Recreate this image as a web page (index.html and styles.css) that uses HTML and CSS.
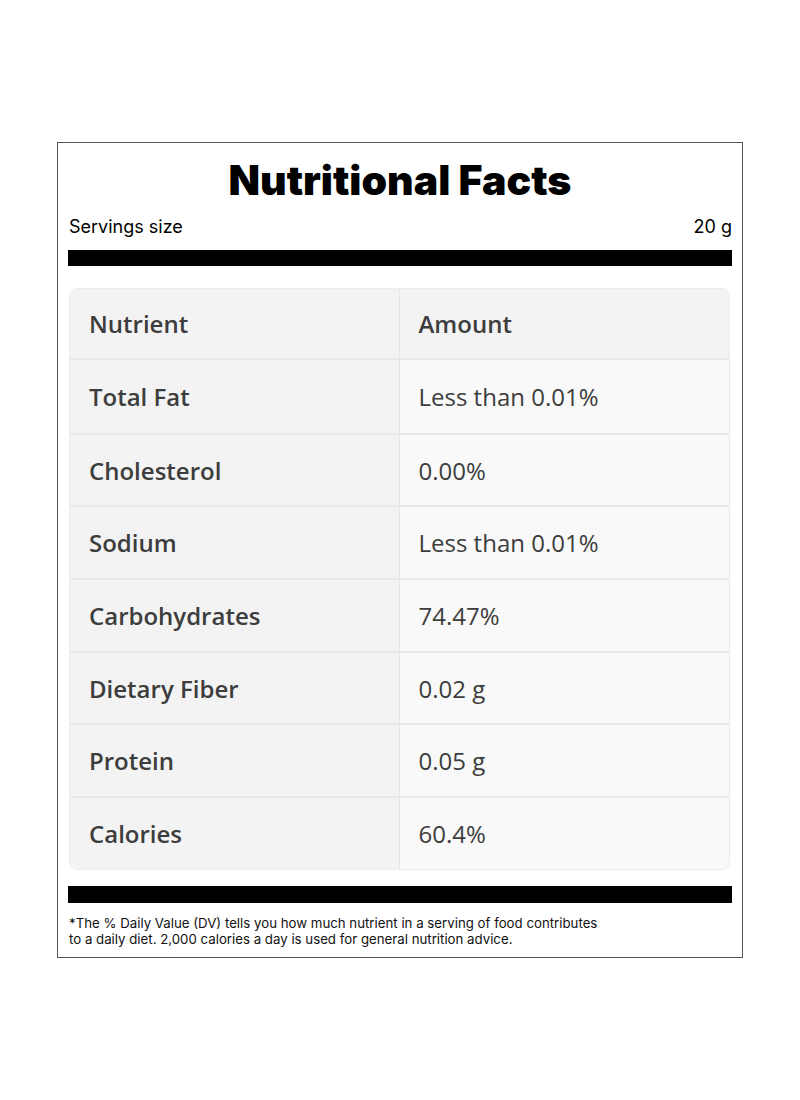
FILE: index.html
```html
<!DOCTYPE html>
<html lang="en">
<head>
<meta charset="utf-8">
<title>Nutritional Facts</title>
<link rel="stylesheet" href="styles.css">
</head>
<body>
<div class="label">
  <h1 class="title">Nutritional Facts</h1>
  <div class="serving">
    <span>Servings size</span>
    <span>20 g</span>
  </div>
  <div class="bar"></div>
  <table class="facts">
    <thead>
      <tr><th>Nutrient</th><th>Amount</th></tr>
    </thead>
    <tbody>
      <tr><td>Total Fat</td><td>Less than 0.01%</td></tr>
      <tr><td>Cholesterol</td><td>0.00%</td></tr>
      <tr><td>Sodium</td><td>Less than 0.01%</td></tr>
      <tr><td>Carbohydrates</td><td>74.47%</td></tr>
      <tr><td>Dietary Fiber</td><td>0.02 g</td></tr>
      <tr><td>Protein</td><td>0.05 g</td></tr>
      <tr><td>Calories</td><td>60.4%</td></tr>
    </tbody>
  </table>
  <div class="bar bar-bottom"></div>
  <p class="note">*The % Daily Value (DV) tells you how much nutrient in a serving of food contributes<br>to a daily diet. 2,000 calories a day is used for general nutrition advice.</p>
</div>
</body>
</html>
```

FILE: styles.css
```css
html, body {
  margin: 0;
  padding: 0;
  background: #fff;
}
body {
  font-family: Inter, "Liberation Sans", sans-serif;
  color: #000;
}
.label {
  box-sizing: border-box;
  width: 686px;
  margin: 142px 0 0 57px;
  border: 1px solid #555;
  padding: 14px 10px 10px 10px;
}
.title {
  margin: 0;
  text-align: center;
  font-family: Inter, sans-serif;
  font-weight: 900;
  font-size: 41px;
  line-height: 46px;
  letter-spacing: 0;
}
.serving {
  display: flex;
  justify-content: space-between;
  font-size: 18px;
  line-height: 22px;
  margin-top: 13px;
  padding: 0 0 0 1px;
}
.bar {
  height: 16px;
  background: #000;
  margin-top: 12px;
}
.facts {
  width: 661px;
  margin: 22px 0 0 1px;
  border-collapse: separate;
  border-spacing: 0;
  border: 1px solid #ececec;
  border-radius: 8px;
  overflow: hidden;
  font-family: "Open Sans", "Noto Sans", sans-serif;
  font-size: 24px;
  color: #3d3d3d;
}
.facts th,
.facts td {
  height: 72.7px;
  padding: 0 0 0 19px;
  text-align: left;
  vertical-align: middle;
  box-sizing: border-box;
  width: 50%;
}
.facts th {
  font-weight: 600;
  background: #f3f3f3;
  border-bottom: 2px solid #e8e8e8;
  height: 71px;
}
.facts td:first-child {
  font-weight: 600;
  background: #f3f3f3;
}
.facts td:last-child {
  font-weight: 400;
  background: #f9f9f9;
}
.facts th:first-child,
.facts td:first-child {
  border-right: 1px solid #e6e6e6;
}
.facts tbody tr + tr td {
  border-top: 2px solid #e8e8e8;
}
.bar-bottom {
  margin-top: 16px;
  height: 17px;
}
.note {
  margin: 12px 0 0 1px;
  font-size: 13.25px;
  line-height: 16px;
  color: #111;
}
```
